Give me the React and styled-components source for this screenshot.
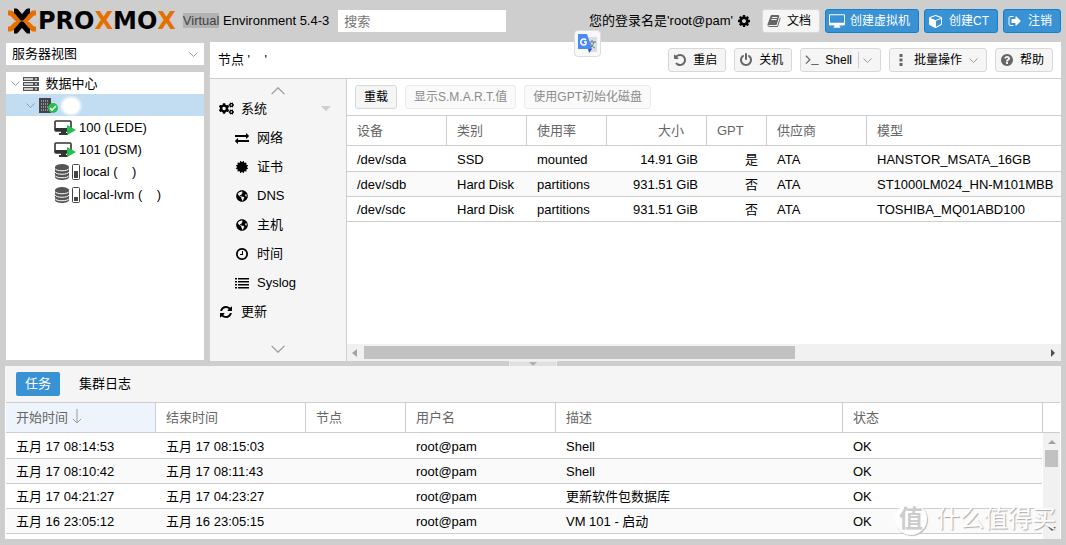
import React from 'react';
import styled, { createGlobalStyle, css } from 'styled-components';
import { FaCogs, FaGlobeAmericas } from 'react-icons/fa';

const GlobalStyle = createGlobalStyle`
  *, *::before {
    box-sizing: border-box;
  }

  body {
    margin: 0;
    background: #cecece;
    color: #000;
    font: 13px/20px "Liberation Sans", "Noto Sans CJK SC", sans-serif;
  }

  button, input, select {
    font: inherit;
    color: inherit;
  }
`;

const Viewport = styled.div`
  display: flex;
  flex-direction: column;
  min-height: 100vh;
  padding: 0 5px 6px;
`;

/* header */

const Header = styled.header`
  display: flex;
  align-items: center;
  height: 42px;
  gap: 5px;
`;

const Logo = styled.a`
  display: flex;
  align-items: center;
  color: #000;
  font: bold 24px/24px "DejaVu Sans", sans-serif;
  text-decoration: none;

  svg {
    width: 30px;
    height: 26px;
    margin: 0 1px 0 2px;
  }

  b {
    color: #e57000;
  }
`;

const Version = styled.span`
  flex: none;
  margin-left: 2px;

  mark {
    background: #b2b2b2;
    color: #444;
  }
`;

const Search = styled.input`
  width: 168px;
  height: 22px;
  margin-left: 4px;
  padding: 0 6px;
  border: 0;
  border-radius: 0;
  background: #fff;

  &::placeholder {
    color: #757575;
    opacity: 1;
  }
`;

const User = styled.button`
  display: flex;
  align-items: center;
  gap: 4px;
  margin-left: auto;
  margin-right: 6px;
  padding: 0;
  border: 0;
  background: none;
  white-space: nowrap;
`;

const Button = styled.button`
  display: flex;
  flex: none;
  align-items: center;
  height: 24px;
  padding: 0 8px;
  border: 1px solid #d8d8d8;
  border-radius: 3px;
  background: #f5f5f5;
  font-size: 12px;
  line-height: 18px;
  white-space: nowrap;

  ${({ $icon }) => $icon && css`
    padding-left: 4px;
    gap: 6px;
  `}

  ${({ $primary }) => $primary && css`
    border-color: #157fcc;
    background: #3892d4;
    color: #fff;
  `}

  &:disabled {
    border-color: #ebebeb;
    background: #fafafa;
    color: #8b8b8b;
  }
`;

const IconSlot = styled.span`
  display: flex;
  align-items: center;
  justify-content: center;
  flex: none;
  width: 14px;
  color: ${({ $color }) => $color || '#666'};

  svg {
    flex: none;
  }
`;

const SplitArrow = styled.span`
  display: flex;
  align-items: center;
  justify-content: flex-end;
  width: ${({ $line }) => ($line ? 14 : 10)}px;
  height: 16px;
  border-left: ${({ $line }) => ($line ? '1px solid #cecece' : '0')};
`;

/* workspace */

const Workspace = styled.div`
  display: flex;
  flex: 1;
  gap: 6px;
`;

const Sidebar = styled.aside`
  display: flex;
  flex-direction: column;
  flex: none;
  width: 199px;
  gap: 7px;
  padding: 1px 0 1px 1px;
`;

const ViewPicker = styled.label`
  display: flex;
  align-items: center;
  height: 22px;
  padding-right: 6px;
  background: #fff;

  select {
    flex: 1;
    height: 22px;
    padding: 0 6px;
    border: 0;
    appearance: none;
    background: none;
  }
`;

const Tree = styled.ul`
  flex: 1;
  margin: 0;
  padding: 0;
  background: #fff;
  list-style: none;
`;

const TreeRow = styled.li`
  display: flex;
  align-items: center;
  height: ${({ $tall }) => ($tall ? 23 : 22)}px;
  padding-top: 1px;
  padding-left: ${({ $depth }) => [5, 20, 48][$depth]}px;
  gap: 3px;
  background: ${({ $selected }) => ($selected ? '#c2ddf2' : 'none')};
  white-space: pre;

  > svg {
    flex: none;
  }
`;

const Smudge = styled.span`
  width: 16px;
  height: 14px;
  margin-left: 2px;
  border-radius: 8px;
  background: #fff;
  box-shadow: 0 0 3px 2px #fff;
`;

const Content = styled.main`
  display: flex;
  flex: 1;
  flex-direction: column;
  min-width: 0;
  background: #fff;
`;

const TitleBar = styled.div`
  display: flex;
  align-items: center;
  height: 37px;
  gap: 8px;
  padding: 0 8px;
  border-bottom: 1px solid #cecece;

  h1 {
    flex: 1;
    margin: 0;
    font-size: 13px;
    font-weight: normal;
    white-space: pre;
  }
`;

const Body = styled.div`
  display: flex;
  flex: 1;
`;

const Menu = styled.nav`
  display: flex;
  flex: none;
  flex-direction: column;
  align-items: center;
  width: 137px;
  padding: 8px 0;
  border-right: 1px solid #cecece;
  background: #f5f5f5;

  ul {
    flex: 1;
    align-self: stretch;
    margin: 0;
    padding: 0;
    list-style: none;
  }
`;

const MenuLink = styled.a`
  display: flex;
  align-items: center;
  height: 29px;
  gap: 8px;
  padding: 0 15px 2px ${({ $sub }) => ($sub ? 25 : 9)}px;
  color: #000;
  text-decoration: none;
`;

const Caret = styled.span`
  margin-left: auto;
  border: 5px solid transparent;
  border-top-color: #cecece;
  border-bottom: 0;
`;

const Panel = styled.div`
  display: flex;
  flex: 1;
  flex-direction: column;
  min-width: 0;
`;

const Toolbar = styled.div`
  display: flex;
  align-items: center;
  height: 36px;
  gap: 8px;
  padding: 0 8px;
`;

const Table = styled.table`
  width: 100%;
  border-collapse: separate;
  border-spacing: 0;
  table-layout: fixed;
  border-top: 1px solid #cecece;

  th, td {
    overflow: hidden;
    padding: 0 9px 0 10px;
    border-bottom: 1px solid #cecece;
    text-align: left;
    white-space: nowrap;
  }

  th {
    height: 30px;
    border-right: 1px solid #cecece;
    color: #666;
    font-weight: normal;
  }

  th:last-child {
    border-right: 0;
  }

  td {
    height: 25px;
    padding-top: 2px;
  }

  tr:first-child td {
    height: 26px;
  }

  tbody tr:nth-child(even) {
    background: #fafafa;
  }
`;

const Th = styled.th`
  width: ${({ $width }) => ($width ? `${$width}px` : 'auto')};

  && {
    background: ${({ $sorted }) => ($sorted ? '#edf4fb' : '#fff')};
    ${({ $right }) => $right && css`
      padding-right: 22px;
      text-align: right;
    `}
  }

  svg {
    margin-left: 4px;
    vertical-align: -2px;
  }
`;

const Td = styled.td`
  && {
    text-align: ${({ $right }) => ($right ? 'right' : 'left')};
  }
`;

const Scrollbar = styled.div`
  display: flex;
  flex-direction: ${({ $vertical }) => ($vertical ? 'column' : 'row')};
  align-items: center;
  justify-content: space-between;
  flex: none;
  ${({ $vertical }) => ($vertical ? 'width: 17px; padding: 5px 0 6px;' : 'height: 17px; margin-top: auto; padding: 0 4px;')}
  background: #f1f1f1;
`;

const Thumb = styled.div`
  ${({ $vertical }) => ($vertical
    ? 'width: 13px; height: 17px; margin: 4px 0 auto;'
    : 'width: 61%; height: 13px; margin: 0 auto 0 5px;')}
  background: #c1c1c1;
`;

const Splitter = styled.div`
  display: flex;
  justify-content: center;
  height: 5px;

  span {
    display: flex;
    align-items: flex-end;
    justify-content: center;
    width: 48px;
    border: solid #ebebeb;
    border-width: 1px 1px 0;
    background: #e0e0e0;
  }
`;

/* log panel */

const LogPanel = styled.section`
  display: flex;
  flex-direction: column;
  height: 173px;
  background: #fff;
`;

const Tabs = styled.div`
  display: flex;
  flex: none;
  align-items: center;
  height: 36px;
  gap: 10px;
  padding: 0 11px;
  background: #f5f5f5;
`;

const Tab = styled.button`
  height: 24px;
  padding: 0 9px;
  border: 0;
  border-radius: 2px;
  background: ${({ $active }) => ($active ? '#3892d4' : 'none')};
  color: ${({ $active }) => ($active ? '#fff' : '#000')};
`;

const LogGrid = styled.div`
  display: flex;
  flex: 1;
  align-items: flex-start;
  padding: 0 1px;
  min-height: 0;
`;

const LogRail = styled.div`
  display: flex;
  flex: none;
  flex-direction: column;
  align-self: stretch;
  width: 18px;

  &::before {
    content: '';
    flex: none;
    height: 31px;
    border: solid #cecece;
    border-width: 1px 0 1px 1px;
  }

  > div {
    flex: 1;
    align-self: flex-end;
  }
`;

const TranslateBadge = styled.button`
  position: absolute;
  top: 30px;
  left: 574px;
  width: 27px;
  height: 27px;
  padding: 3px;
  border: 1px solid #ddd;
  border-radius: 4px;
  background: #f8f8f8;
`;

const Watermark = styled.div`
  position: absolute;
  right: 10px;
  bottom: 9px;
  display: flex;
  align-items: center;
  gap: 9px;
  color: #fff;
  font-size: 24px;
  line-height: 34px;
  text-shadow: 1px 1px 1px #aaa;
  pointer-events: none;

  span {
    width: 32px;
    height: 32px;
    border-radius: 16px;
    background: #fff;
    box-shadow: 1px 1px 1px #bbb;
    color: #ccc;
    font-weight: bold;
    line-height: 32px;
    text-align: center;
    text-shadow: none;
  }
`;

/* icons, on a 1792 grid */

const paths = {
  undo: 'M1664 896q0 156-61 298t-164 245-245 164-298 61q-172 0-327-72.5t-264-204.5q-7-10-6.5-22.5t8.5-20.5l137-138q10-9 25-9 16 2 23 12 73 95 179 147t225 52q104 0 198.5-40.5t163.5-109.5 109.5-163.5 40.5-198.5-40.5-198.5-109.5-163.5-163.5-109.5-198.5-40.5q-98 0-188 35.5t-160 101.5l137 138q31 30 14 69-17 40-59 40h-448q-26 0-45-19t-19-45v-448q0-42 40-59 39-17 69 14l130 129q107-101 244.5-156.5t284.5-55.5q156 0 298 61t245 164 164 245 61 298z',
  power: 'M1664 896q0 156-61 298t-164 245-245 164-298 61-298-61-245-164-164-245-61-298q0-182 80.5-343t226.5-270q43-32 95.5-25t83.5 50q32 42 24.5 94.5t-49.5 84.5q-98 74-151.5 181t-53.5 228q0 104 40.5 198.5t109.5 163.5 163.5 109.5 198.5 40.5 198.5-40.5 163.5-109.5 109.5-163.5 40.5-198.5q0-121-53.5-228t-151.5-181q-42-32-49.5-84.5t24.5-94.5q31-43 84-50t95 25q146 109 226.5 270t80.5 343zm-640-768v640q0 52-38 90t-90 38-90-38-38-90v-640q0-52 38-90t90-38 90 38 38 90z',
  help: 'M1024 1376v-192q0-14-9-23t-23-9h-192q-14 0-23 9t-9 23v192q0 14 9 23t23 9h192q14 0 23-9t9-23zm256-672q0-88-55.5-163t-138.5-116-170-41q-243 0-371 213-15 24 8 42l132 100q7 6 19 6 16 0 25-12 53-68 86-92 34-24 86-24 48 0 85.5 26t37.5 59q0 38-20 61t-68 45q-63 28-115.5 86.5t-52.5 125.5v36q0 14 9 23t23 9h192q14 0 23-9t9-23q0-19 21.5-49.5t54.5-49.5q32-18 49-28.5t46-35 44.5-48 28-60.5 12.5-81zm384 192q0 209-103 385.5t-279.5 279.5-385.5 103-385.5-103-279.5-279.5-103-385.5 103-385.5 279.5-279.5 385.5-103 385.5 103 279.5 279.5 103 385.5z',
  signOut: 'M704 1440q0 4 1 20t.5 26.5-3 23.5-10 19.5-20.5 6.5h-320q-119 0-203.5-84.5t-84.5-203.5v-704q0-119 84.5-203.5t203.5-84.5h320q13 0 22.5 9.5t9.5 22.5q0 4 1 20t.5 26.5-3 23.5-10 19.5-20.5 6.5h-320q-66 0-113 47t-47 113v704q0 66 47 113t113 47h312l11.5 1 11.5 3 8 5.5 7 9 2 13.5zm928-544q0 26-19 45l-544 544q-19 19-45 19t-45-19-19-45v-288h-448q-26 0-45-19t-19-45v-384q0-26 19-45t45-19h448v-288q0-26 19-45t45-19 45 19l544 544q19 19 19 45z',
  cog: 'M1152 896q0-106-75-181t-181-75-181 75-75 181 75 181 181 75 181-75 75-181zm512-109v222q0 12-8 23t-20 13l-185 28q-19 54-39 91 35 50 107 138 10 12 10 25t-9 23q-27 37-99 108t-94 71q-12 0-26-9l-138-108q-44 23-91 38-16 136-29 186-7 28-36 28h-222q-14 0-24.5-8.5t-11.5-21.5l-28-184q-49-16-90-37l-141 107q-10 9-25 9-14 0-25-11-126-114-165-168-7-10-7-23 0-12 8-23 15-21 51-66.5t54-70.5q-27-50-41-99l-183-27q-13-2-21-12.5t-8-23.5v-222q0-12 8-23t19-13l186-28q14-46 39-92-40-57-107-138-10-12-10-24 0-10 9-23 26-36 98.5-107.5t94.5-71.5q13 0 26 10l138 107q44-23 91-38 16-136 29-186 7-28 36-28h222q14 0 24.5 8.5t11.5 21.5l28 184q49 16 90 37l142-107q9-9 24-9 13 0 25 10 129 119 165 170 7 8 7 22 0 12-8 23-15 21-51 66.5t-54 70.5q26 50 41 98l183 28q13 2 21 12.5t8 23.5z',
  refresh: 'M1639 1056q0 5-1 7-64 268-268 434.5t-478 166.5q-146 0-282.5-55t-243.5-157l-129 129q-19 19-45 19t-45-19-19-45v-448q0-26 19-45t45-19h448q26 0 45 19t19 45-19 45l-137 137q71 66 161 102t187 36q134 0 250-65t186-179q11-17 53-117 8-23 30-23h192q13 0 22.5 9.5t9.5 22.5zm25-800v448q0 26-19 45t-45 19h-448q-26 0-45-19t-19-45 19-45l138-138q-148-137-349-137-134 0-250 65t-186 179q-11 17-53 117-8 23-30 23h-199q-13 0-22.5-9.5t-9.5-22.5v-7q65-268 270-434.5t480-166.5q146 0 284 55.5t245 156.5l130-129q19-19 45-19t45 19 19 45z',
  certificate: 'M1504 896l138 135q30 28 20 70-12 41-52 51l-188 48 53 186q12 41-19 70-29 31-70 19l-186-53-48 188q-10 40-51 52-12 2-19 2-31 0-51-22l-135-138-135 138q-28 30-70 20-41-11-51-52l-48-188-186 53q-41 12-70-19-31-29-19-70l53-186-188-48q-40-10-52-51-10-42 20-70l138-135-138-135q-30-28-20-70 12-41 52-51l188-48-53-186q-12-41 19-70 29-31 70-19l186 53 48-188q10-41 51-51 41-12 70 19l135 139 135-139q29-30 70-19 41 10 51 51l48 188 186-53q41-12 70 19 31 29 19 70l-53 186 188 48q40 10 52 51 10 42-20 70z',
  clock: 'M1024 544v448q0 14-9 23t-23 9h-320q-14 0-23-9t-9-23v-64q0-14 9-23t23-9h224v-352q0-14 9-23t23-9h64q14 0 23 9t9 23zm416 352q0-148-73-273t-198-198-273-73-273 73-198 198-73 273 73 273 198 198 273 73 273-73 198-198 73-273zm224 0q0 209-103 385.5t-279.5 279.5-385.5 103-385.5-103-279.5-279.5-103-385.5 103-385.5 279.5-279.5 385.5-103 385.5 103 279.5 279.5 103 385.5z',
  book: 'M1703 478q40 57 18 129l-275 906q-19 64-76.5 107.5t-122.5 43.5h-923q-77 0-148.5-53.5t-99.5-131.5q-24-67-2-127 0-4 3-27t4-37q1-8-3-21.5t-3-19.5q2-11 8-21t16.5-23.5 16.5-23.5q23-38 45-91.5t30-91.5q3-10 .5-30t-.5-28q3-11 17-28t17-23q21-36 42-92t25-90q1-9-2.5-32t.5-28q4-13 22-30.5t22-22.5q19-26 42.5-84.5t27.5-96.5q1-8-3-25.5t-2-26.5q2-8 9-18t18-23 17-21q8-12 16.5-30.5t15-35 16-36 19.5-32 26.5-23.5 36-11.5 47.5 5.5l-1 3q38-9 51-9h761q74 0 114 56t18 130l-274 906q-36 119-71.5 153.500t-128.500 34.500h-869q-27 0-38 15-11 16-1 43 24 70 144 70h923q29 0 56-15.500t35-41.500l300-987q7-22 5-57 38 15 59 43zm-1064 2q-4 13 2 22.500t20 9.500h608q13 0 25.500-9.500t16.500-22.500l21-64q4-13-2-22.500t-20-9.500h-608q-13 0-25.500 9.500t-16.500 22.500zm-83 256q-4 13 2 22.500t20 9.500h608q13 0 25.500-9.500t16.500-22.500l21-64q4-13-2-22.500t-20-9.500h-608q-13 0-25.500 9.500t-16.500 22.500z',
  exchange: 'M1792 1184v192q0 13-9.500 22.500t-22.500 9.500h-1376v192q0 13-9.500 22.500t-22.500 9.500q-12 0-24-10l-319-320q-9-9-9-22 0-14 9-23l320-320q9-9 23-9 13 0 22.500 9.500t9.500 22.500v192h1376q13 0 22.500 9.500t9.500 22.500zm0-544q0 14-9 23l-320 320q-9 9-23 9-13 0-22.500-9.500t-9.500-22.500v-192h-1376q-13 0-22.500-9.500t-9.500-22.500v-192q0-13 9.500-22.500t22.500-9.500h1376v-192q0-14 9-23t23-9q12 0 24 10l319 319q9 9 9 23z',
  list: 'M0 256h256v192H0zM384 256h1408v192H384zM0 640h256v192H0zM384 640h1408v192H384zM0 1024h256v192H0zM384 1024h1408v192H384zM0 1408h256v192H0zM384 1408h1408v192H384z',
  ellipsis: 'M704 128h384v384H704zM704 704h384v384H704zM704 1280h384v384H704z',
  terminal: 'M60 400l110-110 560 560-560 560-110-110 450-450zM800 1410h960v130H800z',
  cube: 'M896 1629l640-349V644l-640 233zM832 764l698-254-698-254-698 254zM1664 512v768q0 73-65 112l-704 384q-61 30-122 0L69 1392q-65-39-65-112V512q0-84 84-120l704-256q40-14 88 0l704 256q80 36 80 120z',
  desktop: 'M128 128h1536q128 0 128 128v1024q0 128-128 128h-512q0 100 128 192v64H512v-64q128-92 128-192H128Q0 1408 0 1280V256q0-128 128-128zM112 240v860h1568V240z',
};

function Icon({ name, size = 14 }) {
  return (
    <svg width={size} height={size} viewBox="0 0 1792 1792" fill="currentColor" fillRule="evenodd" aria-hidden="true">
      <path d={paths[name]} />
    </svg>
  );
}

function Chevron({ width = 9, up = false, color = '#999' }) {
  return (
    <svg width={width} height={Math.round(width / 2)} viewBox="0 0 18 10" fill="none" stroke={color} strokeWidth={width > 10 ? 1.5 : 2} aria-hidden="true">
      <path d={up ? 'M1 9l8-8 8 8' : 'M1 1l8 8 8-8'} />
    </svg>
  );
}

function Arrow({ d, color = '#505050' }) {
  return (
    <svg width="8" height="8" viewBox="0 0 8 8" fill={color} aria-hidden="true"><path d={d} /></svg>
  );
}

function LogoMark() {
  return (
    <svg viewBox="0 0 30 26" fill="none" strokeWidth="5" strokeLinejoin="round" aria-hidden="true">
      <path d="M1 5h3l8 8-8 8H1M29 5h-3l-8 8 8 8h3" stroke="#e57000" />
      <path d="M7 3h2l6 7 6-7h2M7 23h2l6-7 6 7h2" stroke="#000" />
    </svg>
  );
}

function ServerIcon() {
  return (
    <svg width="16" height="14" viewBox="0 0 16 14" aria-hidden="true">
      {[0, 5, 10].map(y => (
        <g key={y}>
          <rect y={y} width="16" height="4" fill="#555" />
          <path d={`M1 ${y + 2}h9`} stroke="#ccc" strokeWidth="2" />
          <path d={`M12 ${y + 2}h2`} stroke="#fff" />
        </g>
      ))}
    </svg>
  );
}

function NodeIcon() {
  return (
    <svg width="20" height="17" viewBox="0 0 20 17" aria-hidden="true">
      <path d="M1 1h12v15H1z" fill="#444" />
      <path d="M3 4h8M3 7h8M3 10h8M3 13h8" stroke="#c2ddf2" strokeDasharray="1 1" />
      <circle cx="15" cy="11" r="5" fill="#21bf4b" />
      <path d="M12 11l2 2 4-4" fill="none" stroke="#fff" strokeWidth="1.6" />
    </svg>
  );
}

function VmIcon() {
  return (
    <svg width="22" height="16" viewBox="0 0 22 16" aria-hidden="true">
      <rect x="1" y="1" width="16" height="10" rx="1" fill="#fff" stroke="#333" strokeWidth="1.6" />
      <path d="M1 8h16v3H1zM7 11h5v2h2v2H5v-2h2z" fill="#333" />
      <path d="M13 5l9 5-9 5z" fill="#21bf4b" />
    </svg>
  );
}

function StorageIcon({ level }) {
  return (
    <svg width="26" height="16" viewBox="0 0 26 16" aria-hidden="true">
      <path d="M1 3v10c0 4 14 4 14 0V3z" fill="#555" />
      <ellipse cx="8" cy="3" rx="7" ry="3" fill="#555" />
      <path d="M1 4.500c1 3 13 3 14 0M1 8c1 3 13 3 14 0M1 11.500c1 3 13 3 14 0" fill="none" stroke="#fff" />
      <rect x="18.500" y="0.500" width="7" height="15" rx="1" fill="#fff" stroke="#444" />
      <rect x="20" y={14 - level} width="4" height={level} fill="#444" />
    </svg>
  );
}

function TranslateIcon() {
  return (
    <svg width="19" height="19" viewBox="0 0 19 19" aria-hidden="true">
      <path d="M8 3h11v15h-7z" fill="#dcdcdc" />
      <path d="M11 8h7M14 6v2M16 8q-1 4-4 6M12 9q2 4 5 5" stroke="#607d8b" fill="none" />
      <path d="M0 0h9l5 15H0z" fill="#4a8af4" />
      <path d="M10 15h4l-3 4z" fill="#3a4fb5" />
      <path d="M8 6a3 3 0 1 0 0 4V8H6" fill="none" stroke="#fff" strokeWidth="1.500" />
    </svg>
  );
}

function IconButton({ icon, children, primary, iconSize }) {
  return (
    <Button type="button" $icon $primary={primary}>
      <IconSlot $color={primary && '#fff'}><Icon name={icon} size={iconSize} /></IconSlot>
      {children}
    </Button>
  );
}

const menuItems = [
  { label: '系统', icon: <FaCogs size={15} />, open: true },
  { label: '网络', icon: <Icon name="exchange" />, sub: true },
  { label: '证书', icon: <Icon name="certificate" />, sub: true },
  { label: 'DNS', icon: <FaGlobeAmericas size={12} />, sub: true },
  { label: '主机', icon: <FaGlobeAmericas size={12} />, sub: true },
  { label: '时间', icon: <Icon name="clock" />, sub: true },
  { label: 'Syslog', icon: <Icon name="list" />, sub: true },
  { label: '更新', icon: <Icon name="refresh" /> },
];

const diskColumns = [
  { label: '设备', width: 100 },
  { label: '类别', width: 80 },
  { label: '使用率', width: 80 },
  { label: '大小', width: 100, right: true, headRight: true },
  { label: 'GPT', width: 60, right: true },
  { label: '供应商', width: 100 },
  { label: '模型' },
];

const disks = [
  ['/dev/sda', 'SSD', 'mounted', '14.91 GiB', '是', 'ATA', 'HANSTOR_MSATA_16GB'],
  ['/dev/sdb', 'Hard Disk', 'partitions', '931.51 GiB', '否', 'ATA', 'ST1000LM024_HN-M101MBB'],
  ['/dev/sdc', 'Hard Disk', 'partitions', '931.51 GiB', '否', 'ATA', 'TOSHIBA_MQ01ABD100'],
];

const taskColumns = [
  { label: '开始时间', width: 150, sorted: true },
  { label: '结束时间', width: 150 },
  { label: '节点', width: 100 },
  { label: '用户名', width: 150 },
  { label: '描述' },
  { label: '状态', width: 199 },
];

const tasks = [
  ['五月 17 08:14:53', '五月 17 08:15:03', '', 'root@pam', 'Shell', 'OK'],
  ['五月 17 08:10:42', '五月 17 08:11:43', '', 'root@pam', 'Shell', 'OK'],
  ['五月 17 04:21:27', '五月 17 04:23:27', '', 'root@pam', '更新软件包数据库', 'OK'],
  ['五月 16 23:05:12', '五月 16 23:05:15', '', 'root@pam', 'VM 101 - 启动', 'OK'],
];

function Grid({ columns, rows }) {
  return (
    <Table>
      <thead>
        <tr>
          {columns.map(col => (
            <Th key={col.label} $width={col.width} $right={col.headRight} $sorted={col.sorted}>
              {col.label}
              {col.sorted && (
                <svg width="10" height="15" viewBox="0 0 10 15" fill="none" stroke="#999" aria-hidden="true">
                  <path d="M5 0v14M1 10l4 4 4-4" />
                </svg>
              )}
            </Th>
          ))}
        </tr>
      </thead>
      <tbody>
        {rows.map(row => (
          <tr key={row[0]}>
            {row.map((cell, i) => <Td key={columns[i].label} $right={columns[i].right}>{cell}</Td>)}
          </tr>
        ))}
      </tbody>
    </Table>
  );
}

export default function App() {
  return (
    <Viewport>
      <GlobalStyle />
      <Header>
        <Logo href="#home">
          <LogoMark />
          <span>PRO<b>X</b>MO<b>X</b></span>
        </Logo>
        <Version><mark>Virtual</mark> Environment 5.4-3</Version>
        <Search type="text" placeholder="搜索" aria-label="搜索" />
        <User type="button">
          您的登录名是&apos;root@pam&apos;
          <Icon name="cog" />
        </User>
        <IconButton icon="book">文档</IconButton>
        <IconButton icon="desktop" iconSize={16} primary>创建虚拟机</IconButton>
        <IconButton icon="cube" primary>创建CT</IconButton>
        <IconButton icon="signOut" primary>注销</IconButton>
      </Header>

      <Workspace>
        <Sidebar>
          <ViewPicker>
            <select aria-label="服务器视图" defaultValue="server">
              <option value="server">服务器视图</option>
            </select>
            <Chevron />
          </ViewPicker>
          <Tree>
            <TreeRow $depth={0}>
              <Chevron />
              <ServerIcon />
              <span> 数据中心</span>
            </TreeRow>
            <TreeRow $depth={1} $selected>
              <Chevron />
              <NodeIcon />
              <Smudge />
            </TreeRow>
            <TreeRow $depth={2}><VmIcon />100 (LEDE)</TreeRow>
            <TreeRow $depth={2}><VmIcon />101 (DSM)</TreeRow>
            <TreeRow $depth={2} $tall><StorageIcon level={7} />{'local (    )'}</TreeRow>
            <TreeRow $depth={2} $tall><StorageIcon level={4} />{'local-lvm (    )'}</TreeRow>
          </Tree>
        </Sidebar>

        <Content>
          <TitleBar>
            <h1>{'节点 \'    \''}</h1>
            <IconButton icon="undo">重启</IconButton>
            <IconButton icon="power">关机</IconButton>
            <Button type="button" $icon>
              <IconSlot><Icon name="terminal" /></IconSlot>
              Shell
              <SplitArrow $line><Chevron /></SplitArrow>
            </Button>
            <Button type="button" $icon>
              <IconSlot><Icon name="ellipsis" /></IconSlot>
              批量操作
              <SplitArrow><Chevron /></SplitArrow>
            </Button>
            <IconButton icon="help">帮助</IconButton>
          </TitleBar>
          <Body>
            <Menu>
              <Chevron width={16} up />
              <ul>
                {menuItems.map(item => (
                  <li key={item.label}>
                    <MenuLink href={`#${item.label}`} $sub={item.sub}>
                      <IconSlot $color="#000">{item.icon}</IconSlot>
                      {item.label}
                      {item.open && <Caret />}
                    </MenuLink>
                  </li>
                ))}
              </ul>
              <Chevron width={16} />
            </Menu>
            <Panel>
              <Toolbar>
                <Button type="button">重载</Button>
                <Button type="button" disabled>显示S.M.A.R.T.值</Button>
                <Button type="button" disabled>使用GPT初始化磁盘</Button>
              </Toolbar>
              <Grid columns={diskColumns} rows={disks} />
              <Scrollbar>
                <Arrow d="M6 0v8L1 4z" color="#a3a3a3" />
                <Thumb />
                <Arrow d="M2 0v8l4-4z" />
              </Scrollbar>
            </Panel>
          </Body>
        </Content>
      </Workspace>

      <Splitter>
        <span>
          <svg width="8" height="4" viewBox="0 0 8 4" fill="#b0b0b0" aria-hidden="true"><path d="M0 0h8L4 4z" /></svg>
        </span>
      </Splitter>

      <LogPanel>
        <Tabs>
          <Tab type="button" $active>任务</Tab>
          <Tab type="button">集群日志</Tab>
        </Tabs>
        <LogGrid>
          <Grid columns={taskColumns} rows={tasks} />
          <LogRail>
            <Scrollbar $vertical>
              <Arrow d="M0 6h8L4 2z" color="#a3a3a3" />
              <Thumb $vertical />
              <Arrow d="M0 2h8L4 6z" />
            </Scrollbar>
          </LogRail>
        </LogGrid>
      </LogPanel>

      <TranslateBadge type="button" aria-label="翻译"><TranslateIcon /></TranslateBadge>
      <Watermark><span>值</span>什么值得买</Watermark>
    </Viewport>
  );
}
